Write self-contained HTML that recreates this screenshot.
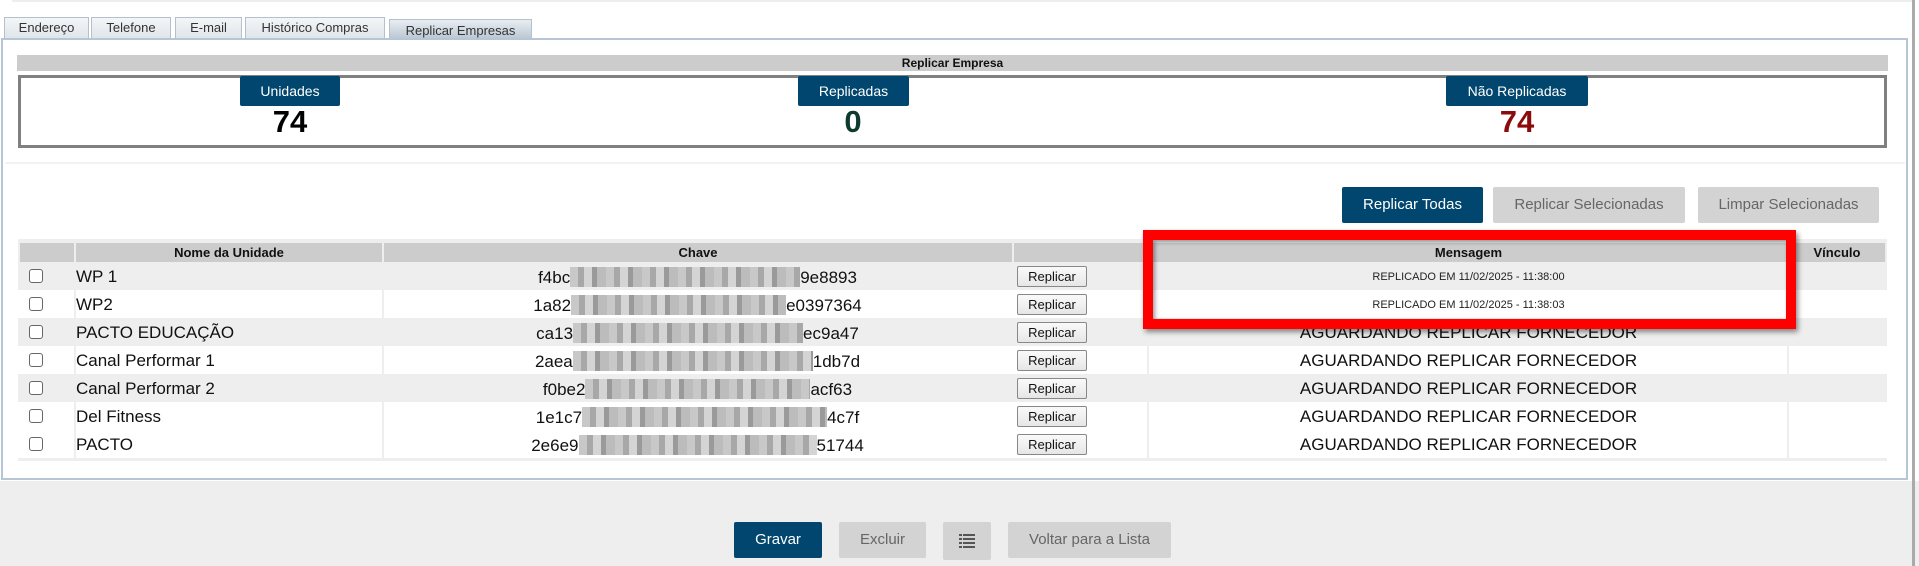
<!DOCTYPE html>
<html><head><meta charset="utf-8"><style>
*{box-sizing:border-box;margin:0;padding:0}
body{width:1919px;height:566px;background:#fff;font-family:"Liberation Sans",sans-serif;position:relative;overflow:hidden}
.a{position:absolute}
.tab{position:absolute;top:17px;height:21px;background:linear-gradient(#f4f6f8,#dfe5ea);border:1px solid #b4c0cc;border-bottom:none;font-size:13px;color:#333;text-align:center;line-height:19px}
.badge{position:absolute;top:76px;height:30px;background:#00466e;color:#fff;font-size:14px;text-align:center;line-height:30px;border-radius:2px}
.num{position:absolute;top:104px;font-size:31px;font-weight:bold;text-align:center;width:200px}
.btn{position:absolute;font-size:15px;text-align:center;border-radius:2px}
.th{position:absolute;top:243px;height:19px;background:#ccc;font-size:13px;font-weight:bold;color:#111;text-align:center;line-height:19px}
.row{position:absolute;left:18px;width:1869px;height:28px}
.cb{position:absolute;left:11px;top:7px;width:14px;height:14px;border:1px solid #666;border-radius:3px;background:#fff}
.nm{position:absolute;left:58px;top:5px;font-size:17px;color:#111}
.key{position:absolute;left:365px;width:629px;top:5px;font-size:17px;color:#111;text-align:center}
.blur{display:inline-block;height:20px;vertical-align:-4px;background:repeating-linear-gradient(90deg,#c8c8c8 0 8px,#a8a8a8 8px 14px,#d4d4d4 14px 22px,#9a9a9a 22px 27px,#bcbcbc 27px 36px)}
.rb{position:absolute;left:999px;top:4px;width:70px;height:21px;border:1px solid #888;border-radius:2px;background:linear-gradient(#fafafa,#e6e6e6);font-size:13px;line-height:19px;text-align:center;color:#111}
.msg{position:absolute;left:1131px;width:639px;top:5px;font-size:17px;color:#111;text-align:center}
.sm{font-size:11px;top:9px;color:#222}
.vl{position:absolute;top:0;width:2px;height:28px;background:#fff}
</style></head><body>
<div class="a" style="left:12px;top:0;width:1900px;height:2px;background:#eee"></div>
<div class="tab" style="left:4px;width:85px">Endereço</div>
<div class="tab" style="left:91px;width:80px">Telefone</div>
<div class="tab" style="left:175px;width:67px">E-mail</div>
<div class="tab" style="left:245px;width:140px">Histórico Compras</div>
<div class="tab" style="left:389px;width:143px;top:19px;background:linear-gradient(#e8edf2,#b7c4d1);line-height:21px">Replicar Empresas</div>
<div class="a" style="left:1px;top:38px;width:1907px;height:442px;border:2px solid #b6c6d6;background:#fff"></div>
<div class="a" style="left:17px;top:55px;width:1871px;height:16px;background:#ccc;font-size:12px;font-weight:bold;text-align:center;line-height:16px;color:#111">Replicar Empresa</div>
<div class="a" style="left:18px;top:75px;width:1869px;height:73px;border:3px solid #808080"></div>
<div class="badge" style="left:240px;width:100px">Unidades</div>
<div class="num" style="left:190px;color:#000">74</div>
<div class="badge" style="left:798px;width:111px">Replicadas</div>
<div class="num" style="left:753px;color:#0e3b2e">0</div>
<div class="badge" style="left:1446px;width:142px">Não Replicadas</div>
<div class="num" style="left:1417px;color:#8b0a0a">74</div>
<div class="a" style="left:5px;top:162px;width:1900px;height:2px;background:#f2f2f2"></div>
<div class="btn" style="left:1342px;top:187px;width:141px;height:36px;background:#00466e;color:#fff;line-height:36px">Replicar Todas</div>
<div class="btn" style="left:1493px;top:187px;width:192px;height:36px;background:#d4d3d3;color:#666;line-height:36px">Replicar Selecionadas</div>
<div class="btn" style="left:1698px;top:187px;width:181px;height:36px;background:#d4d3d3;color:#666;line-height:36px">Limpar Selecionadas</div>
<div class="a" style="left:18px;top:239px;width:1869px;height:222px;background:#eee"></div>
<div class="th" style="left:20px;width:54px"></div>
<div class="th" style="left:76px;width:306px">Nome da Unidade</div>
<div class="th" style="left:384px;width:628px">Chave</div>
<div class="th" style="left:1014px;width:134px"></div>
<div class="th" style="left:1150px;width:637px">Mensagem</div>
<div class="th" style="left:1789px;width:96px">Vínculo</div>

<div class="row" style="top:262px;background:#eee"><div class="cb"></div><div class="nm">WP 1</div><div class="key">f4bc<span class="blur" style="width:230px"></span>9e8893</div><div class="rb">Replicar</div><div class="msg sm">REPLICADO EM 11/02/2025 - 11:38:00</div></div>
<div class="row" style="top:290px;background:#fff"><div class="vl" style="left:56px;background:#eee"></div><div class="vl" style="left:364px;background:#eee"></div><div class="cb"></div><div class="nm">WP2</div><div class="key">1a82<span class="blur" style="width:215px"></span>e0397364</div><div class="rb">Replicar</div><div class="msg sm">REPLICADO EM 11/02/2025 - 11:38:03</div></div>
<div class="row" style="top:318px;background:#eee"><div class="cb"></div><div class="nm">PACTO EDUCAÇÃO</div><div class="key">ca13<span class="blur" style="width:230px"></span>ec9a47</div><div class="rb">Replicar</div><div class="msg">AGUARDANDO REPLICAR FORNECEDOR</div></div>
<div class="row" style="top:346px;background:#fff"><div class="vl" style="left:56px;background:#eee"></div><div class="vl" style="left:364px;background:#eee"></div><div class="vl" style="left:1129px;background:#eee"></div><div class="vl" style="left:1769px;background:#eee"></div><div class="cb"></div><div class="nm">Canal Performar 1</div><div class="key">2aea<span class="blur" style="width:240px"></span>1db7d</div><div class="rb">Replicar</div><div class="msg">AGUARDANDO REPLICAR FORNECEDOR</div></div>
<div class="row" style="top:374px;background:#eee"><div class="cb"></div><div class="nm">Canal Performar 2</div><div class="key">f0be2<span class="blur" style="width:225px"></span>acf63</div><div class="rb">Replicar</div><div class="msg">AGUARDANDO REPLICAR FORNECEDOR</div></div>
<div class="row" style="top:402px;background:#fff"><div class="vl" style="left:56px;background:#eee"></div><div class="vl" style="left:364px;background:#eee"></div><div class="vl" style="left:1129px;background:#eee"></div><div class="vl" style="left:1769px;background:#eee"></div><div class="cb"></div><div class="nm">Del Fitness</div><div class="key">1e1c7<span class="blur" style="width:245px"></span>4c7f</div><div class="rb">Replicar</div><div class="msg">AGUARDANDO REPLICAR FORNECEDOR</div></div>
<div class="row" style="top:430px;background:#fff"><div class="vl" style="left:56px;background:#eee"></div><div class="vl" style="left:364px;background:#eee"></div><div class="vl" style="left:1129px;background:#eee"></div><div class="vl" style="left:1769px;background:#eee"></div><div class="cb"></div><div class="nm">PACTO</div><div class="key">2e6e9<span class="blur" style="width:238px"></span>51744</div><div class="rb">Replicar</div><div class="msg">AGUARDANDO REPLICAR FORNECEDOR</div></div>

<div class="a" style="left:1143px;top:230px;width:653px;height:99px;border:10px solid #f00;box-shadow:2px 3px 5px rgba(0,0,0,.45),inset 2px 2px 4px rgba(0,0,0,.4)"></div>

<div class="a" style="left:0;top:481px;width:1919px;height:85px;background:#eee"></div>
<div class="btn" style="left:734px;top:522px;width:88px;height:36px;background:#00466e;color:#fff;line-height:36px">Gravar</div>
<div class="btn" style="left:839px;top:522px;width:87px;height:36px;background:#d4d3d3;color:#666;line-height:36px">Excluir</div>
<div class="btn" style="left:943px;top:522px;width:48px;height:38px;background:#d4d3d3">
<svg width="16" height="14" style="margin-top:12px" viewBox="0 0 16 14"><g fill="#555"><rect x="0" y="0" width="3" height="2"/><rect x="4" y="0" width="12" height="2"/><rect x="0" y="4" width="3" height="2"/><rect x="4" y="4" width="12" height="2"/><rect x="0" y="8" width="3" height="2"/><rect x="4" y="8" width="12" height="2"/><rect x="0" y="12" width="3" height="2"/><rect x="4" y="12" width="12" height="2"/></g></svg></div>
<div class="btn" style="left:1008px;top:522px;width:163px;height:36px;background:#d4d3d3;color:#666;line-height:36px">Voltar para a Lista</div>
<div class="a" style="left:1912px;top:0;width:3px;height:566px;background:#aaa"></div>
</body></html>
